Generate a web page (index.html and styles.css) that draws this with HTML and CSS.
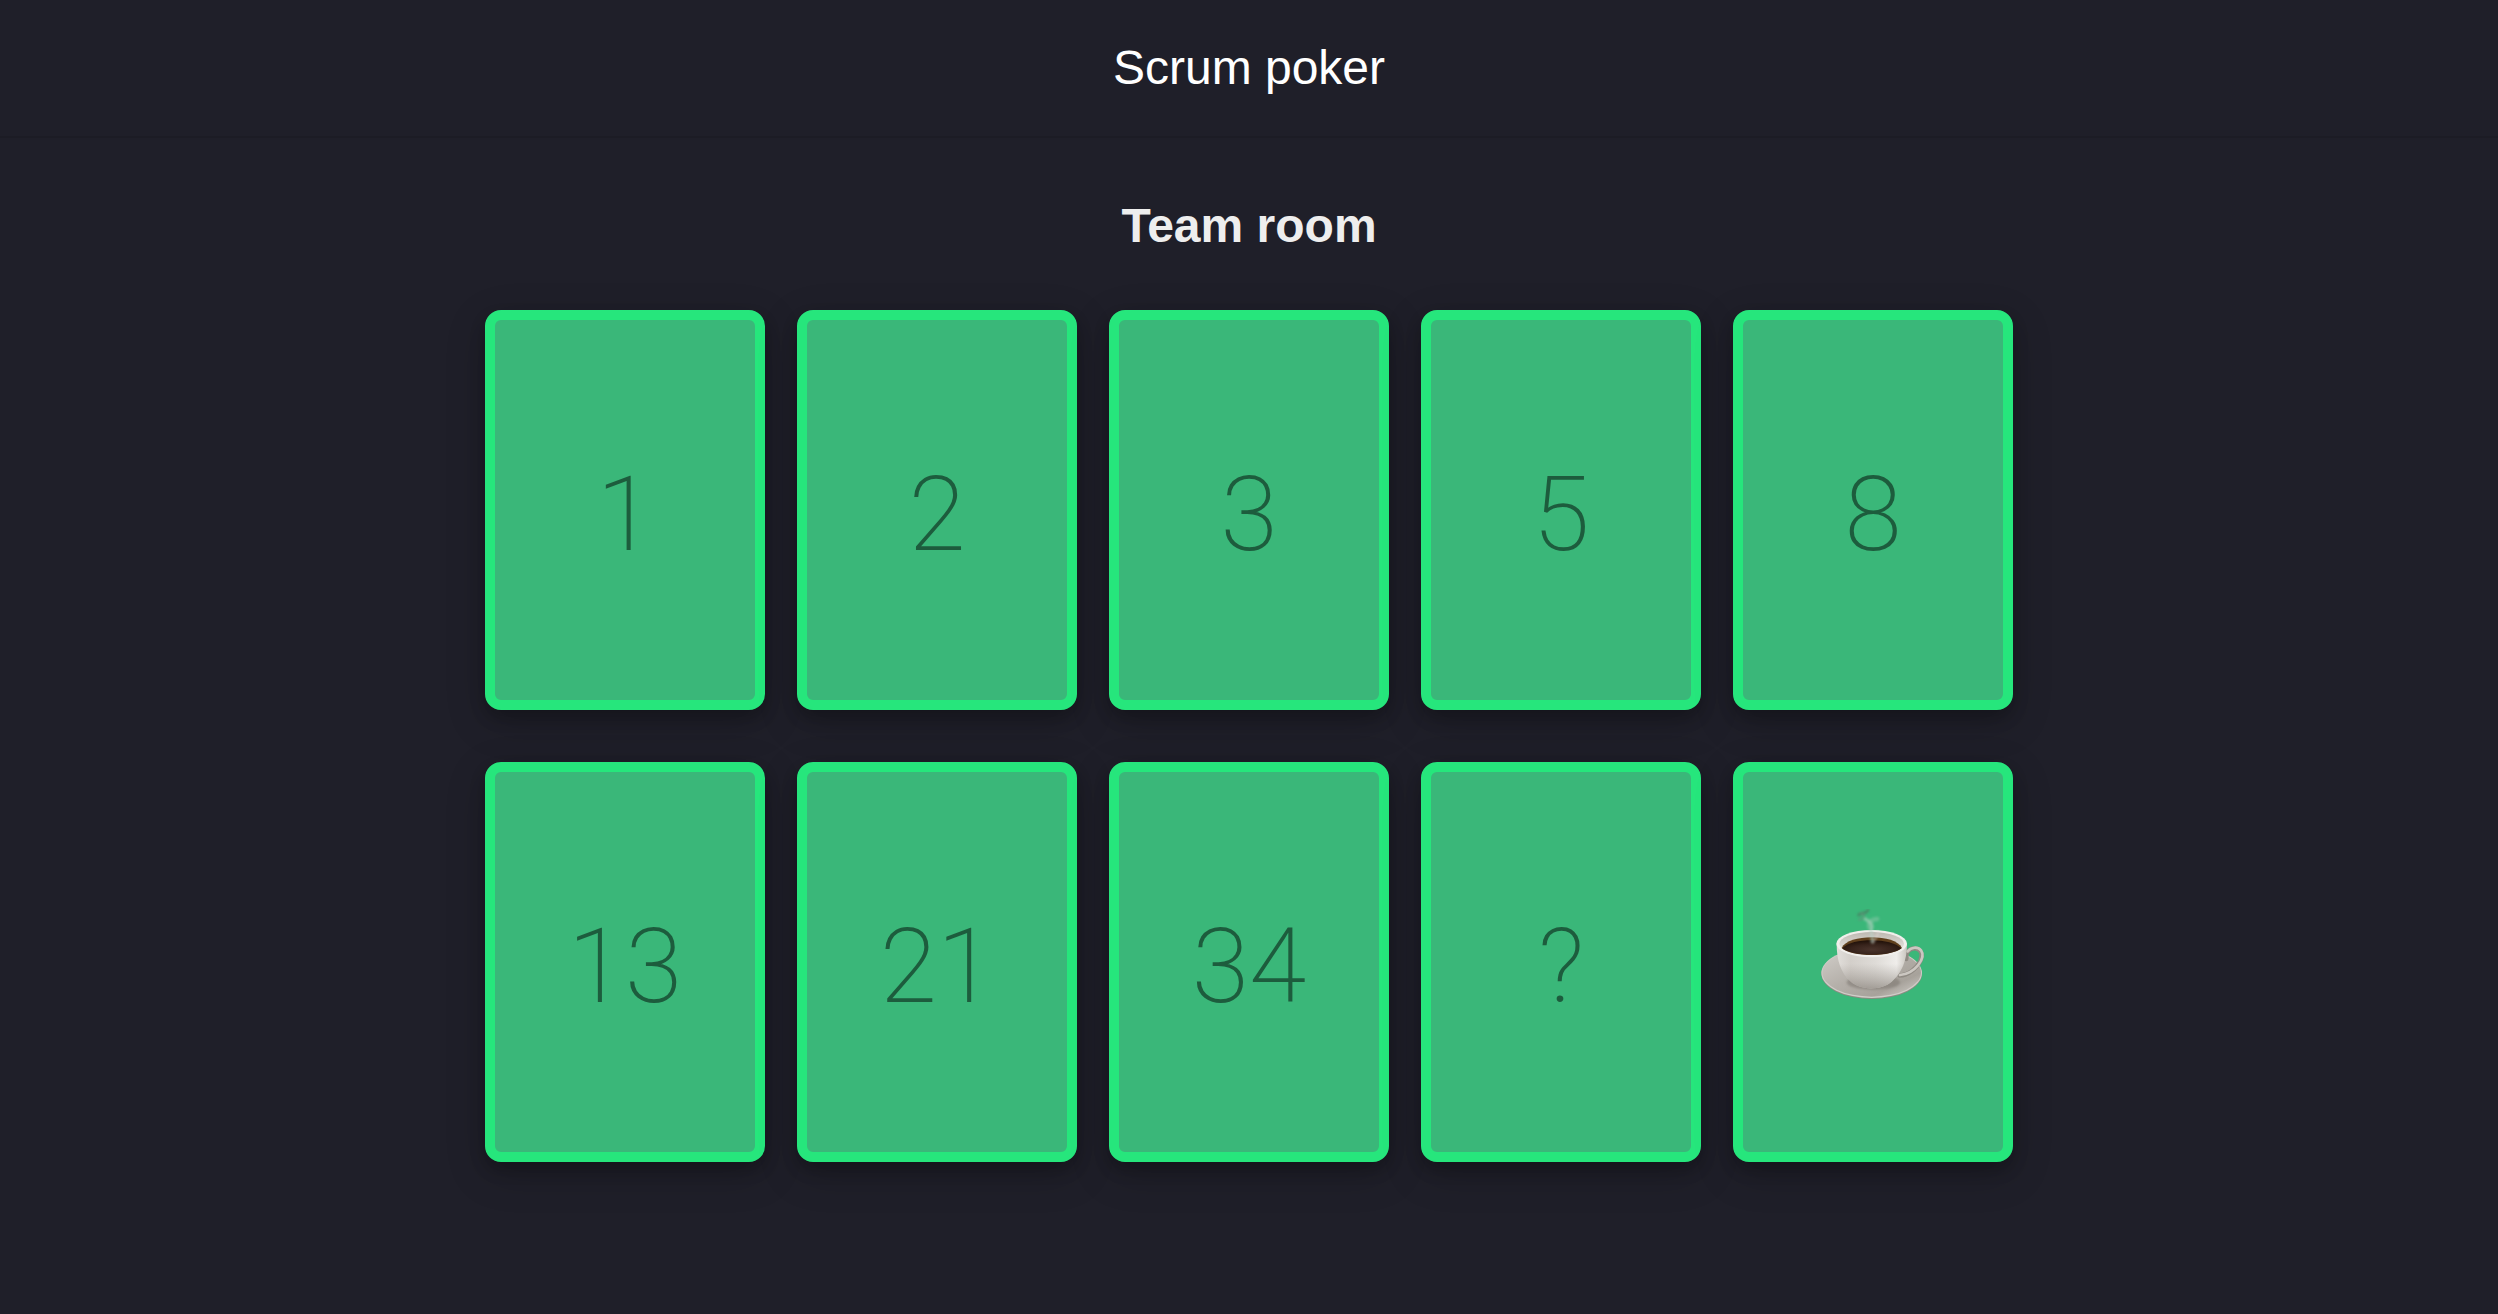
FILE: index.html
```html
<!DOCTYPE html>
<html lang="en">
<head>
<meta charset="utf-8">
<meta name="viewport" content="width=device-width, initial-scale=1">
<title>Scrum poker</title>
<link rel="stylesheet" href="styles.css">
</head>
<body>
<header class="topbar">
  <h1 class="topbar-title">Scrum poker</h1>
</header>
<main class="room">
  <h2 class="room-title">Team room</h2>
  <div class="deck">
    <button class="card" type="button">1</button>
    <button class="card" type="button">2</button>
    <button class="card" type="button">3</button>
    <button class="card" type="button">5</button>
    <button class="card" type="button">8</button>
    <button class="card" type="button">13</button>
    <button class="card" type="button">21</button>
    <button class="card" type="button">34</button>
    <button class="card" type="button">?</button>
    <button class="card" type="button" aria-label="Coffee break">
      <svg class="coffee" viewBox="87 86 324 342" aria-hidden="true">
        <defs>
          <linearGradient id="saucer" x1="0" y1="0" x2="1" y2="1">
            <stop offset="0" stop-color="#d2cfca"/>
            <stop offset=".45" stop-color="#b5b0aa"/>
            <stop offset=".75" stop-color="#a7a29b"/>
            <stop offset="1" stop-color="#d6d3ce"/>
          </linearGradient>
          <linearGradient id="cup" x1="0" y1="0" x2="1" y2="0">
            <stop offset="0" stop-color="#e2dfdb"/>
            <stop offset=".2" stop-color="#d3cfca"/>
            <stop offset=".55" stop-color="#dedbd7"/>
            <stop offset=".85" stop-color="#efedea"/>
            <stop offset="1" stop-color="#c9c5bf"/>
          </linearGradient>
          <linearGradient id="shade" x1="0" y1="0" x2="0" y2="1">
            <stop offset=".45" stop-color="#8d8780" stop-opacity="0"/>
            <stop offset="1" stop-color="#7d766e" stop-opacity=".6"/>
          </linearGradient>
          <linearGradient id="inner" x1="0" y1="0" x2="0" y2="1">
            <stop offset="0" stop-color="#bdb8b1"/>
            <stop offset="1" stop-color="#f3f1ee"/>
          </linearGradient>
          <radialGradient id="brew" cx=".5" cy=".65" r=".6">
            <stop offset="0" stop-color="#4a342c"/>
            <stop offset=".6" stop-color="#37231b"/>
            <stop offset="1" stop-color="#23130b"/>
          </radialGradient>
          <filter id="soft" x="-50%" y="-50%" width="200%" height="200%">
            <feGaussianBlur stdDeviation="3"/>
          </filter>
        </defs>
        <ellipse cx="245" cy="281" rx="151" ry="75" fill="#8f8a83"/>
        <ellipse cx="245" cy="278" rx="151" ry="75" fill="#d0cdc8"/>
        <ellipse cx="245" cy="277" rx="148" ry="72" fill="url(#saucer)"/>
        <ellipse cx="250" cy="306" rx="80" ry="22" fill="#77716a" opacity=".5" filter="url(#soft)"/>
        <path d="M349 236C347 214 360 203 376 204C394 207 400 222 391 242C379 266 354 285 329 286" fill="none" stroke="#8f8a83" stroke-width="13" stroke-linecap="round"/>
        <path d="M353 213C363 200 383 198 393 210C402 223 397 239 384 255C369 273 350 282 330 284" fill="none" stroke="#cbc7c1" stroke-width="8" stroke-linecap="round"/>
        <path d="M140 190C140 242 153 276 181 303C210 331 274 331 305 304C334 278 351 243 351 190Z" fill="url(#cup)"/>
        <path d="M140 190C140 242 153 276 181 303C210 331 274 331 305 304C334 278 351 243 351 190Z" fill="url(#shade)"/>
        <ellipse cx="245" cy="190" rx="106" ry="41" fill="#f1efec"/>
        <ellipse cx="245" cy="190" rx="97" ry="35" fill="url(#inner)"/>
        <path d="M155 203C166 181 204 171 245 171C287 171 324 181 336 203C320 216 286 224 245 224C205 224 170 217 155 203Z" fill="#60401d"/>
        <path d="M157 204C174 187 207 180 245 180C284 180 317 188 334 204C318 216 286 223 245 223C205 223 172 216 157 204Z" fill="url(#brew)"/>
        <g fill="none" stroke-linecap="round" filter="url(#soft)">
          <path d="M246 184C250 169 240 158 245 144C250 130 236 122 226 116" stroke="#b9d3c5" stroke-width="10" opacity=".55"/>
          <path d="M239 144C232 130 243 116 262 116" stroke="#9fcab4" stroke-width="13" opacity=".4"/>
          <path d="M206 104C214 94 224 104 234 90" stroke="#4a7a60" stroke-width="9" opacity=".65"/>
          <path d="M208 118C220 116 228 106 214 98" stroke="#5f957a" stroke-width="8" opacity=".6"/>
          <path d="M263 152C268 164 257 173 249 188" stroke="#e6dfda" stroke-width="5" opacity=".45"/>
        </g>
      </svg>
    </button>
  </div>
</main>
</body>
</html>
```
FILE: styles.css
```css
* { box-sizing: border-box; }

body {
  margin: 0;
  min-height: 100vh;
  background: #1f1f29;
  color: #eee;
  font-family: "Helvetica Neue", "Liberation Sans", Arial, sans-serif;
}

.topbar {
  padding: 40px;
  border-bottom: 2px solid #1c1c25;
  text-align: center;
}

.topbar-title,
.room-title {
  margin: 0;
  font-size: 48px;
  line-height: 56px;
}

.topbar-title {
  color: #fff;
  font-weight: 400;
}

.room {
  padding: 60px 32px;
  text-align: center;
}

.room-title { font-weight: 700; }

.deck {
  display: flex;
  flex-wrap: wrap;
  justify-content: center;
  gap: 52px 32px;
  max-width: 1528px;
  margin: 56px auto 0;
}

.card {
  display: flex;
  align-items: center;
  justify-content: center;
  width: 280px;
  height: 400px;
  padding: 8px 0 0;
  border: 10px solid #26e67c;
  border-radius: 16px;
  background: #3ab779;
  box-shadow: 0 8px 16px rgba(0, 0, 0, .2), 0 12px 40px rgba(0, 0, 0, .19);
  color: #1d5c3d;
  font-family: Roboto, sans-serif;
  font-size: 104px;
  font-weight: 180;
  cursor: pointer;
}

.coffee {
  width: 108px;
  height: 114px;
}
```
